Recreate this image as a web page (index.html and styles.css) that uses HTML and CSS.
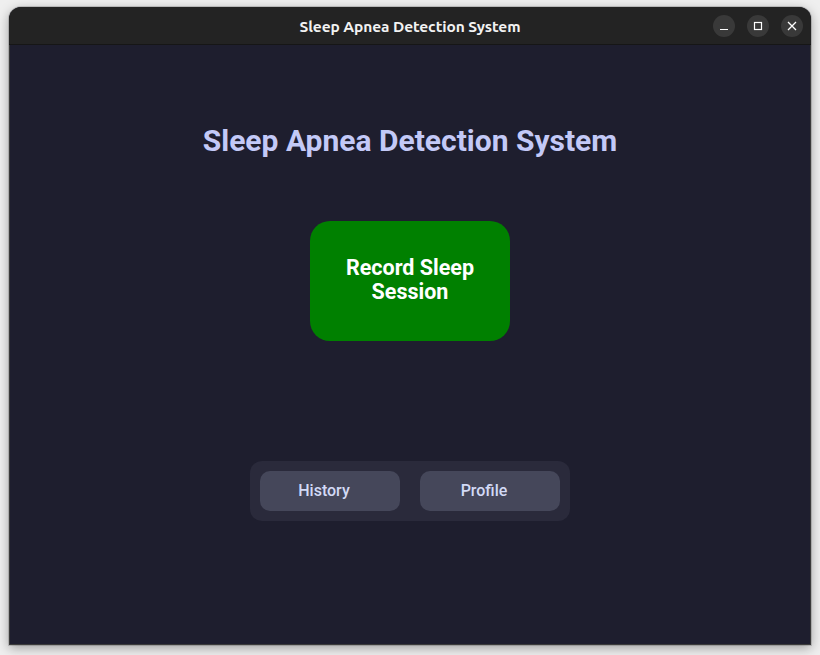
FILE: index.html
```html
<!DOCTYPE html>
<html>
<head>
<meta charset="utf-8">
<link rel="stylesheet" href="styles.css">
</head>
<body>
<div class="window">
  <div class="titlebar">
    <div class="title">Sleep Apnea Detection System</div>
    <div class="controls">
      <span class="ctl"><svg width="10" height="10" viewBox="0 0 10 10"><path d="M1 8.5h8" stroke="#fff" stroke-width="1.2"/></svg></span>
      <span class="ctl"><svg width="10" height="10" viewBox="0 0 10 10"><rect x="1.5" y="1.5" width="7" height="7" fill="none" stroke="#fff" stroke-width="1.2"/></svg></span>
      <span class="ctl"><svg width="10" height="10" viewBox="0 0 10 10"><path d="M1 1L9 9M9 1L1 9" stroke="#fff" stroke-width="1.3"/></svg></span>
    </div>
  </div>
  <div class="content">
    <h1 class="heading">Sleep Apnea Detection System</h1>
    <button class="record">Record Sleep<br>Session</button>
    <div class="nav">
      <button class="nav-btn">History</button>
      <button class="nav-btn">Profile</button>
    </div>
  </div>
</div>
</body>
</html>
```
FILE: styles.css
```css
html, body {
  margin: 0;
  padding: 0;
}
body {
  width: 820px;
  height: 655px;
  background: #efefef;
  overflow: hidden;
  padding: 7px 9px 0 9px;
  box-sizing: border-box;
}
.window {
  width: 802px;
  height: 638px;
  border-radius: 12px 12px 0 0;
  overflow: hidden;
  box-shadow: 0 3px 12px rgba(0,0,0,0.35), 0 0 0 1px rgba(0,0,0,0.15);
  display: flex;
  flex-direction: column;
  background: #1e1e2e;
}
.titlebar {
  height: 37px;
  flex: none;
  background: #232323;
  border-bottom: 1px solid #161616;
  position: relative;
  display: flex;
  align-items: center;
  justify-content: center;
}
.title {
  font-family: "Ubuntu", "Open Sans", "Liberation Sans", sans-serif;
  font-weight: bold;
  font-size: 15.5px;
  letter-spacing: -0.1px;
  color: #f2f2f2;
  margin-top: 1px;
}
.controls {
  position: absolute;
  right: 8px;
  top: 8px;
  display: flex;
  gap: 12px;
}
.ctl {
  width: 22px;
  height: 22px;
  border-radius: 50%;
  background: #393939;
  display: flex;
  align-items: center;
  justify-content: center;
}
.content {
  flex: 1;
  display: flex;
  flex-direction: column;
  align-items: center;
  border-left: 1px solid #3a3a3a;
  border-right: 1px solid #3a3a3a;
  border-bottom: 1px solid #3a3a3a;
}
.heading {
  margin: 78px 0 0 0;
  font-family: Roboto, "Liberation Sans", sans-serif;
  font-weight: bold;
  font-size: 30px;
  line-height: 36px;
  color: #c3c9f7;
}
.record {
  margin-top: 62px;
  width: 200px;
  height: 120px;
  border: none;
  border-radius: 20px;
  background: #008000;
  color: #ffffff;
  font-family: Roboto, "Liberation Sans", sans-serif;
  font-weight: bold;
  font-size: 21.5px;
  line-height: 24px;
  padding: 0 0 2px 0;
}
.nav {
  margin-top: 120px;
  padding: 10px;
  gap: 20px;
  display: flex;
  background: #2a2a3b;
  border-radius: 12px;
}
.nav-btn {
  width: 140px;
  height: 40px;
  border: none;
  border-radius: 10px;
  background: #45475a;
  color: #d3daf6;
  font-family: Roboto, "Liberation Sans", sans-serif;
  font-weight: 500;
  font-size: 16px;
  padding: 0 12px 2px 0;
}
```
